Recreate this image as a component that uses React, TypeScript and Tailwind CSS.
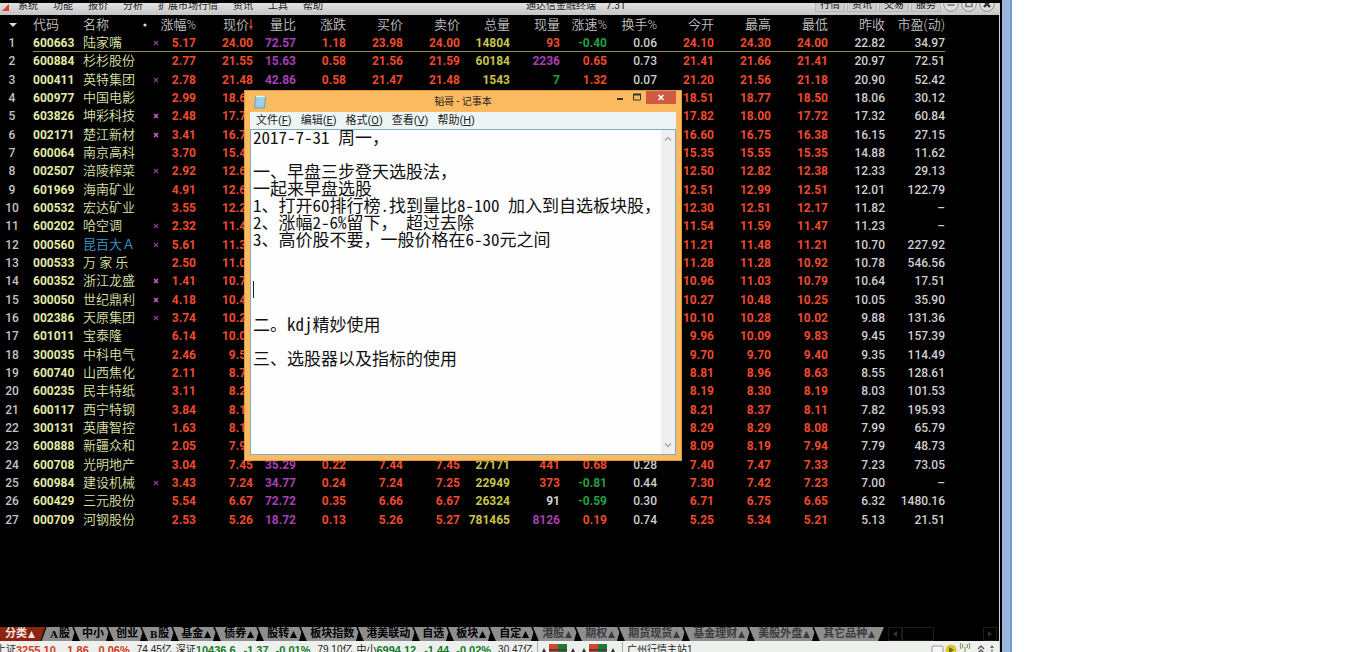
import React from "react";

type Tone = "r" | "p" | "y" | "g" | "w";

const tones: Record<Tone, string> = {
  r: "text-[#ee4a2e]",
  p: "text-[#a540b4]",
  y: "text-[#c6c44c]",
  g: "text-[#22a040]",
  w: "text-[#cfcfcf]",
};

type Row = {
  code: string;
  name: string;
  flag?: "dim" | "bright";
  rise: string;
  price: string;
  mid?: string[];
  speedTone?: Tone;
  lotTone?: Tone;
  open: string;
  high: string;
  low: string;
  close: string;
  pe: string;
};

const row = (
  code: string,
  name: string,
  flag: "" | "dim" | "bright",
  values: string,
  mid?: string,
  lotTone: Tone = "r",
  speedTone: Tone = "r",
): Row => {
  const [rise, price, open, high, low, close, pe] = values.split(" ");
  return {
    code,
    name,
    flag: flag || undefined,
    rise,
    price,
    mid: mid ? mid.split(" ") : undefined,
    lotTone,
    speedTone,
    open,
    high,
    low,
    close,
    pe,
  };
};

const rows: Row[] = [
  row("600663", "陆家嘴", "dim", "5.17 24.00 24.10 24.30 24.00 22.82 34.97", "72.57 1.18 23.98 24.00 14804 93 -0.40 0.06", "r", "g"),
  row("600884", "杉杉股份", "", "2.77 21.55 21.41 21.66 21.41 20.97 72.51", "15.63 0.58 21.56 21.59 60184 2236 0.65 0.73", "p"),
  row("000411", "英特集团", "dim", "2.78 21.48 21.20 21.56 21.18 20.90 52.42", "42.86 0.58 21.47 21.48 1543 7 1.32 0.07", "g"),
  row("600977", "中国电影", "", "2.99 18.60 18.51 18.77 18.50 18.06 30.12"),
  row("603826", "坤彩科技", "bright", "2.48 17.75 17.82 18.00 17.72 17.32 60.84"),
  row("002171", "楚江新材", "bright", "3.41 16.70 16.60 16.75 16.38 16.15 27.15"),
  row("600064", "南京高科", "", "3.70 15.43 15.35 15.55 15.35 14.88 11.62"),
  row("002507", "涪陵榨菜", "dim", "2.92 12.69 12.50 12.82 12.38 12.33 29.13"),
  row("601969", "海南矿业", "", "4.91 12.60 12.51 12.99 12.51 12.01 122.79"),
  row("600532", "宏达矿业", "", "3.55 12.24 12.30 12.51 12.17 11.82 –"),
  row("600202", "哈空调", "dim", "2.32 11.49 11.54 11.59 11.47 11.23 –"),
  row("000560", "昆百大Ａ", "dim", "5.61 11.30 11.21 11.48 11.21 10.70 227.92"),
  row("000533", "万 家 乐", "", "2.50 11.05 11.28 11.28 10.92 10.78 546.56"),
  row("600352", "浙江龙盛", "bright", "1.41 10.79 10.96 11.03 10.79 10.64 17.51"),
  row("300050", "世纪鼎利", "bright", "4.18 10.47 10.27 10.48 10.25 10.05 35.90"),
  row("002386", "天原集团", "dim", "3.74 10.25 10.10 10.28 10.02 9.88 131.36"),
  row("601011", "宝泰隆", "", "6.14 10.03 9.96 10.09 9.83 9.45 157.39"),
  row("300035", "中科电气", "", "2.46 9.58 9.70 9.70 9.40 9.35 114.49"),
  row("600740", "山西焦化", "", "2.11 8.73 8.81 8.96 8.63 8.55 128.61"),
  row("600235", "民丰特纸", "", "3.11 8.28 8.19 8.30 8.19 8.03 101.53"),
  row("600117", "西宁特钢", "", "3.84 8.12 8.21 8.37 8.11 7.82 195.93"),
  row("300131", "英唐智控", "", "1.63 8.12 8.29 8.29 8.08 7.99 65.79"),
  row("600888", "新疆众和", "", "2.05 7.95 8.09 8.19 7.94 7.79 48.73"),
  row("600708", "光明地产", "", "3.04 7.45 7.40 7.47 7.33 7.23 73.05", "35.29 0.22 7.44 7.45 27171 441 0.68 0.28"),
  row("600984", "建设机械", "dim", "3.43 7.24 7.30 7.42 7.23 7.00 –", "34.77 0.24 7.24 7.25 22949 373 -0.81 0.44", "r", "g"),
  row("600429", "三元股份", "", "5.54 6.67 6.71 6.75 6.65 6.32 1480.16", "72.72 0.35 6.66 6.67 26324 91 -0.59 0.30", "w", "g"),
  row("000709", "河钢股份", "", "2.53 5.26 5.25 5.34 5.21 5.13 21.51", "18.72 0.13 5.26 5.27 781465 8126 0.19 0.74", "p"),
];

const headers = ["量比", "涨跌", "买价", "卖价", "总量", "现量", "涨速%", "换手%", "今开", "最高", "最低", "昨收", "市盈(动)"];

const menus = ["系统", "功能", "报价", "分析", "扩展市场行情", "资讯", "工具", "帮助"];
const quick = ["行情", "资讯", "交易", "服务"];

type Tab = { letter?: string; label: string; more?: boolean; dim?: boolean };
const tabs: Tab[] = [
  { letter: "A", label: "股" },
  { label: "中小" },
  { label: "创业" },
  { letter: "B", label: "股" },
  { label: "基金", more: true },
  { label: "债券", more: true },
  { label: "股转", more: true },
  { label: "板块指数" },
  { label: "港美联动" },
  { label: "自选" },
  { label: "板块", more: true },
  { label: "自定", more: true },
  { label: "港股", more: true, dim: true },
  { label: "期权", more: true, dim: true },
  { label: "期货现货", more: true, dim: true },
  { label: "基金理财", more: true, dim: true },
  { label: "美股外盘", more: true, dim: true },
  { label: "其它品种", more: true, dim: true },
];

const note = `2017-7-31 周一，

一、早盘三步登天选股法，
一起来早盘选股
1、打开60排行榜.找到量比8-100 加入到自选板块股，
2、涨幅2-6%留下， 超过去除
3、高价股不要，一般价格在6-30元之间




二。kdj精妙使用

三、选股器以及指标的使用`;

function TopBar() {
  return (
    <header className="flex h-3 shrink-0 items-end overflow-hidden bg-linear-to-b from-[#e2e2e2] to-[#c4c4c4] pb-[3px] text-[10px] leading-3 text-[#222]">
      <svg className="ml-0.5 h-2 w-4 shrink-0" viewBox="0 0 16 8" aria-hidden="true">
        <path d="M0 7 L7 0 V7 Z" fill="#d8432c" />
      </svg>
      <nav className="flex gap-[15px]">
        {menus.map((m) => (
          <button key={m} type="button">{m}</button>
        ))}
      </nav>
      <h1 className="ml-[203px] flex gap-2.5">
        <span>通达信金融终端</span>
        <span>7.31</span>
      </h1>
      <div className="ml-auto flex items-end gap-0.5 pr-1">
        {quick.map((q) => (
          <button key={q} type="button" className="w-[30px] border border-t-0 border-[#b4b4b4] bg-[#cdcdcd] text-center">{q}</button>
        ))}
        {["M4.5 9 H11.5", "M5 6 H11 V10.5 H5 Z", "M5 5 L11 11 M11 5 L5 11"].map((d, i) => (
          <button key={d} type="button" aria-label={["最小化", "最大化", "关闭"][i]}>
            <svg className="size-4" viewBox="0 0 16 16" aria-hidden="true">
              <circle cx="8" cy="8" r="7.3" fill="#dedede" stroke="#8c8c8c" />
              <path d={d} fill="none" stroke={i === 2 ? "#333" : "#777"} strokeWidth={i === 2 ? 2.4 : 1.6} />
            </svg>
          </button>
        ))}
      </div>
    </header>
  );
}

function Quotes() {
  return (
    <table className="w-full table-fixed border-separate border-spacing-0 text-right text-[12px] leading-4 font-bold whitespace-nowrap">
      <colgroup>
        <col className="w-[33px]" />
        <col className="w-[50px]" />
        <col className="w-[64px]" />
        <col className="w-[12px]" />
        <col className="w-[37px]" />
        <col className="w-[57px]" />
        <col className="w-[43px]" />
        <col className="w-[50px]" />
        <col className="w-[57px]" />
        <col className="w-[57px]" />
        <col className="w-[50px]" />
        <col className="w-[50px]" />
        <col className="w-[47px]" />
        <col className="w-[50px]" />
        <col className="w-[57px]" />
        <col className="w-[57px]" />
        <col className="w-[57px]" />
        <col className="w-[57px]" />
        <col className="w-[60px]" />
        <col />
      </colgroup>
      <thead>
        <tr className="h-[19px] text-[13px] text-[#c2c2c2] [&>th]:p-0 [&>th]:font-[350]">
          <th className="text-center">
            <svg className="ml-[9px] h-1 w-2" viewBox="0 0 8 4" aria-hidden="true">
              <path d="M0 0 H8 L4 4 Z" fill="#d8d8d8" />
            </svg>
          </th>
          <th className="text-left">代码</th>
          <th className="text-left">名称</th>
          <th className="text-left">
            <svg className="-ml-1 size-1" viewBox="0 0 4 4" aria-hidden="true">
              <circle cx="2" cy="2" r="1.6" fill="#d8d8d8" />
            </svg>
          </th>
          <th>涨幅%</th>
          <th>
            <span className="inline-flex items-center">
              现价
              <svg className="h-3 w-1" viewBox="0 0 4 12" aria-hidden="true">
                <path d="M2 0 V8" stroke="#e0402a" strokeWidth="1.2" />
                <path d="M0 7 H4 L2 11 Z" fill="#e0402a" />
              </svg>
            </span>
          </th>
          {headers.map((h) => (
            <th key={h}>{h}</th>
          ))}
        </tr>
      </thead>
      <tbody className="[&_td]:p-0 [&>tr]:h-[18px] [&>tr:nth-child(3n)]:h-[19px]">
        {rows.map((r, i) => {
          const midTones: Tone[] = ["p", "r", "r", "r", "y", r.lotTone ?? "r", r.speedTone ?? "r", "w"];
          return (
            <tr key={r.code} className={i === 0 ? "[&>td:not(:first-child)]:border-b [&>td:not(:first-child)]:border-[#8f8f48]" : ""}>
              <td className="text-center font-medium text-[#c4c4c4]">
                <span className="mr-[9px]">{i + 1}</span>
              </td>
              <td className="text-left text-[#e2eaa6]">{r.code}</td>
              <td className={`text-left text-[13px] font-[350] ${r.code === "000560" ? "text-[#3a9cd0]" : "text-[#dbe2a8]"}`}>{r.name}</td>
              <td>
                {r.flag && (
                  <svg className="ml-1.5 size-1.5" viewBox="0 0 6 6" aria-hidden="true">
                    <path d="M1 1 L5 5 M5 1 L1 5" stroke={r.flag === "bright" ? "#d850e0" : "#8a3c94"} strokeWidth={r.flag === "bright" ? 1.6 : 1.1} />
                  </svg>
                )}
              </td>
              <td className={tones.r}>{r.rise}</td>
              <td className={tones.r}>{r.price}</td>
              {midTones.map((t, k) => (
                <td key={k} className={`${tones[t]} ${k === 7 ? "font-medium" : ""}`}>{r.mid?.[k]}</td>
              ))}
              <td className={tones.r}>{r.open}</td>
              <td className={tones.r}>{r.high}</td>
              <td className={tones.r}>{r.low}</td>
              <td className={`font-medium ${tones.w}`}>{r.close}</td>
              <td className={`font-medium ${tones.w}`}>{r.pe}</td>
            </tr>
          );
        })}
      </tbody>
    </table>
  );
}

function Notepad() {
  const items = [
    ["文件", "F"],
    ["编辑", "E"],
    ["格式", "O"],
    ["查看", "V"],
    ["帮助", "H"],
  ];
  return (
    <section className="absolute top-[90px] left-[244px] flex h-[371px] w-[438px] flex-col border border-[#d99a45] bg-[#fbba60] px-[5px] pb-[5px] text-[#222]">
      <div className="flex h-[21px] shrink-0 items-center">
        <svg className="ml-1 h-[14px] w-3 shrink-0" viewBox="0 0 12 14" aria-hidden="true">
          <path d="M1.5 1.5 H11.5 L10.5 13 H0.5 Z" fill="#8fcbe2" stroke="#5b9cb8" strokeWidth=".8" />
          <path d="M3 4 H10 M2.8 6.5 H9.6 M2.6 9 H9.2" stroke="#b4deec" />
          <path d="M2 1.5 H11" stroke="#e8f4f4" strokeWidth="1.4" />
        </svg>
        <h2 className="flex-1 pl-12 text-center text-[10px] leading-4">韬哥 - 记事本</h2>
        <div className="flex h-full items-start">
          <button type="button" aria-label="最小化" className="h-3 w-4">
            <svg className="h-3 w-4" viewBox="0 0 16 12" aria-hidden="true">
              <path d="M5 8 H11" stroke="#333" strokeWidth="2" />
            </svg>
          </button>
          <button type="button" aria-label="最大化" className="h-3 w-[18px]">
            <svg className="h-3 w-[18px]" viewBox="0 0 18 12" aria-hidden="true">
              <path d="M5.5 3.5 H12.5 V9 H5.5 Z" fill="none" stroke="#333" />
              <path d="M5 3.5 H13" stroke="#333" strokeWidth="2" />
            </svg>
          </button>
          <button type="button" aria-label="关闭" className="h-[13px] w-[30px] bg-[#d05a42]">
            <svg className="h-[13px] w-[30px]" viewBox="0 0 30 13" aria-hidden="true">
              <path d="M12.5 4 L17.5 9 M17.5 4 L12.5 9" stroke="#fff" strokeWidth="1.6" />
            </svg>
          </button>
        </div>
      </div>
      <div className="flex h-[17px] shrink-0 items-center gap-[9px] bg-[#eef5f6] pl-1.5 text-[11px] leading-4">
        {items.map(([t, k]) => (
          <button key={k} type="button">
            {t}(<u>{k}</u>)
          </button>
        ))}
      </div>
      <div className="flex min-h-0 flex-1 border border-[#7fa9bd] bg-[#fdfefd]">
        <div className="relative flex flex-1">
          <textarea
            aria-label="记事本内容"
            readOnly
            defaultValue={note}
            className="-mt-0.5 flex-1 resize-none overflow-hidden bg-transparent pl-0.5 font-['Noto_Sans_Mono_CJK_SC','Noto_Sans_CJK_SC',monospace] text-[17px] leading-[17px] font-light whitespace-pre text-[#111] outline-none"
          />
          <span className="absolute top-[151px] left-0.5 h-[17px] w-px bg-[#222]" />
        </div>
        <div className="flex w-[14px] shrink-0 flex-col items-center justify-between bg-[#eeeff0] py-1.5">
          <svg className="h-1.5 w-2" viewBox="0 0 8 6" aria-hidden="true">
            <path d="M1 4.5 L4 1.5 L7 4.5" fill="none" stroke="#a8a8a8" strokeWidth="1.3" />
          </svg>
          <svg className="h-1.5 w-2" viewBox="0 0 8 6" aria-hidden="true">
            <path d="M1 1.5 L4 4.5 L7 1.5" fill="none" stroke="#a8a8a8" strokeWidth="1.3" />
          </svg>
        </div>
      </div>
    </section>
  );
}

function Up() {
  return (
    <svg className="ml-px h-[7px] w-[7px]" viewBox="0 0 7 7" aria-hidden="true">
      <path d="M3.5 0 L7 7 H0 Z" fill="currentColor" />
    </svg>
  );
}

function TabBar() {
  return (
    <nav className="flex h-[14px] shrink-0 overflow-hidden text-[11px] leading-[14px] font-bold">
      <button type="button" className="flex items-center bg-[#8e2410] pl-[5px] text-[#f0e4e0]">
        分类<Up />
      </button>
      <svg className="h-[14px] w-[15px] shrink-0" viewBox="0 0 15 14" aria-hidden="true">
        <rect width="15" height="14" fill="#8e8e8e" />
        <path d="M0 0 H11 L6 14 H0 Z" fill="#8e2410" />
        <path d="M11 0 L6 14" stroke="#111" strokeWidth="1.4" />
      </svg>
      {tabs.map((t, i) => (
        <React.Fragment key={`${t.letter ?? ""}${t.label}`}>
          <button type="button" className={`flex shrink-0 items-center bg-[#8e8e8e] ${t.dim ? "text-[#3c3c3c]" : "text-black"}`}>
            {t.letter && <span className="mr-px font-['Liberation_Serif',serif]">{t.letter}</span>}
            {t.label}
            {t.more && <Up />}
          </button>
          <svg className={`h-[14px] shrink-0 ${t.more ? "w-[13px]" : "w-3"}`} viewBox={t.more ? "0 0 13 14" : "0 0 12 14"} aria-hidden="true">
            {i < tabs.length - 1 ? (
              <>
                <rect width="13" height="14" fill="#8e8e8e" />
                <path d="M4.5 5 L9.5 14 H2 Z" fill="#000" />
                <path d="M3 0 L9 14" stroke="#000" strokeWidth="1.6" />
              </>
            ) : (
              <path d="M0 0 H9 L3 14 H0 Z" fill="#8e8e8e" />
            )}
          </svg>
        </React.Fragment>
      ))}
      <div className="flex flex-1 pr-0.5 text-[#333]">
        <button type="button" aria-label="向左" className="w-[14px] border border-[#1c1c1c]">
          <svg className="mx-auto h-2 w-1" viewBox="0 0 4 8" aria-hidden="true"><path d="M4 1 V7 L0 4 Z" fill="currentColor" /></svg>
        </button>
        <div className="w-8 border border-[#1c1c1c]" />
        <button type="button" aria-label="向右" className="ml-auto w-[14px] border border-[#1c1c1c]">
          <svg className="mx-auto h-2 w-1" viewBox="0 0 4 8" aria-hidden="true"><path d="M0 1 V7 L4 4 Z" fill="currentColor" /></svg>
        </button>
      </div>
    </nav>
  );
}

function IndexQuote({ label, value, diff, pct, amount, up }: { label: string; value: string; diff: string; pct: string; amount: string; up?: boolean }) {
  const tone = up ? "text-[#d03a20]" : "text-[#127a28]";
  return (
    <div className="flex shrink-0 gap-[7px]">
      <span className="flex">
        <span className="text-[10px]">{label}</span>
        <b className={tone}>{value}</b>
      </span>
      <b className={`min-w-[26px] text-right ${tone}`}>{diff}</b>
      <b className={`min-w-[34px] text-right ${tone}`}>{pct}</b>
      <span className="text-[10px]">{amount}</span>
    </div>
  );
}

function Meter() {
  return (
    <svg className="h-3 w-9 shrink-0" viewBox="0 0 36 12" aria-hidden="true">
      <path d="M0 8 L2 4 L4 8 Z M29 8 L31 4 L33 8 Z" fill="#333" />
      <rect x="7" y="0" width="9" height="10" fill="#d8452c" />
      <rect x="16" y="0" width="9" height="10" fill="#1e7a34" />
      <rect x="7" y="5" width="18" height="2" fill="#444" />
    </svg>
  );
}

function StatusBar() {
  return (
    <footer className="flex h-[11px] shrink-0 items-start overflow-hidden bg-[#eef0ee] text-[#222]">
      <div className="-ml-1 flex h-[18px] min-w-0 flex-1 items-center gap-1 overflow-hidden font-['Liberation_Sans','Noto_Sans_CJK_SC',sans-serif] text-[11px] leading-4 whitespace-nowrap">
        <IndexQuote label="上证" value="3255.10" diff="1.86" pct="0.06%" amount="74.45亿" up />
        <IndexQuote label="深证" value="10436.6" diff="-1.37" pct="-0.01%" amount="79.10亿" />
        <IndexQuote label="中小" value="6994.12" diff="-1.44" pct="-0.02%" amount="30.47亿" />
        <span className="h-4 w-px bg-[#aaa]" />
        <Meter />
        <Meter />
        <span className="h-4 w-px bg-[#aaa]" />
        <span className="text-[10px]">广州行情主站1</span>
      </div>
      <svg className="h-4 w-[68px] shrink-0" viewBox="0 0 68 16" aria-hidden="true">
        <rect x="1" y="5" width="11" height="9" rx="1" fill="#f6f6f6" stroke="#999" />
        <circle cx="20" cy="9" r="5.5" fill="#d8c828" />
        <path d="M18 6 V12 L23 9 Z" fill="#6b6a20" />
        <path d="M34 6 V14 M32 3 a4 4 0 0 0 0 4 M36 3 a4 4 0 0 1 0 4 M30 2 a6 6 0 0 0 0 6 M38 2 a6 6 0 0 1 0 6" fill="none" stroke="#7c8f4a" />
        <path d="M47 8 L50 5 L53 8 M47 12 L50 9 L53 12" fill="none" stroke="#555" strokeWidth="1.4" />
        <path d="M59 7 L61 4 L63 7 Z M60.5 8 H61.5 V14 H60.5 Z" fill="#666" />
      </svg>
    </footer>
  );
}

export default function App() {
  return (
    <div className="flex h-screen overflow-hidden bg-white font-[Roboto,'Noto_Sans_CJK_SC',sans-serif]">
      <div className="relative flex w-[74%] flex-col bg-black">
        <div className="h-[3px] shrink-0" />
        <div className="flex min-h-0 flex-1">
          <div className="flex min-w-0 flex-1 flex-col">
            <TopBar />
            <main className="min-h-0 flex-1 overflow-hidden">
              <Quotes />
            </main>
            <TabBar />
            <StatusBar />
          </div>
          <div className="w-px bg-[#c8dcc8]" />
          <div className="w-0.5" />
        </div>
        <Notepad />
      </div>
      <div className="w-[10px] border-r-2 border-[#6f9bd0] bg-[#9bb6dc]" />
    </div>
  );
}
